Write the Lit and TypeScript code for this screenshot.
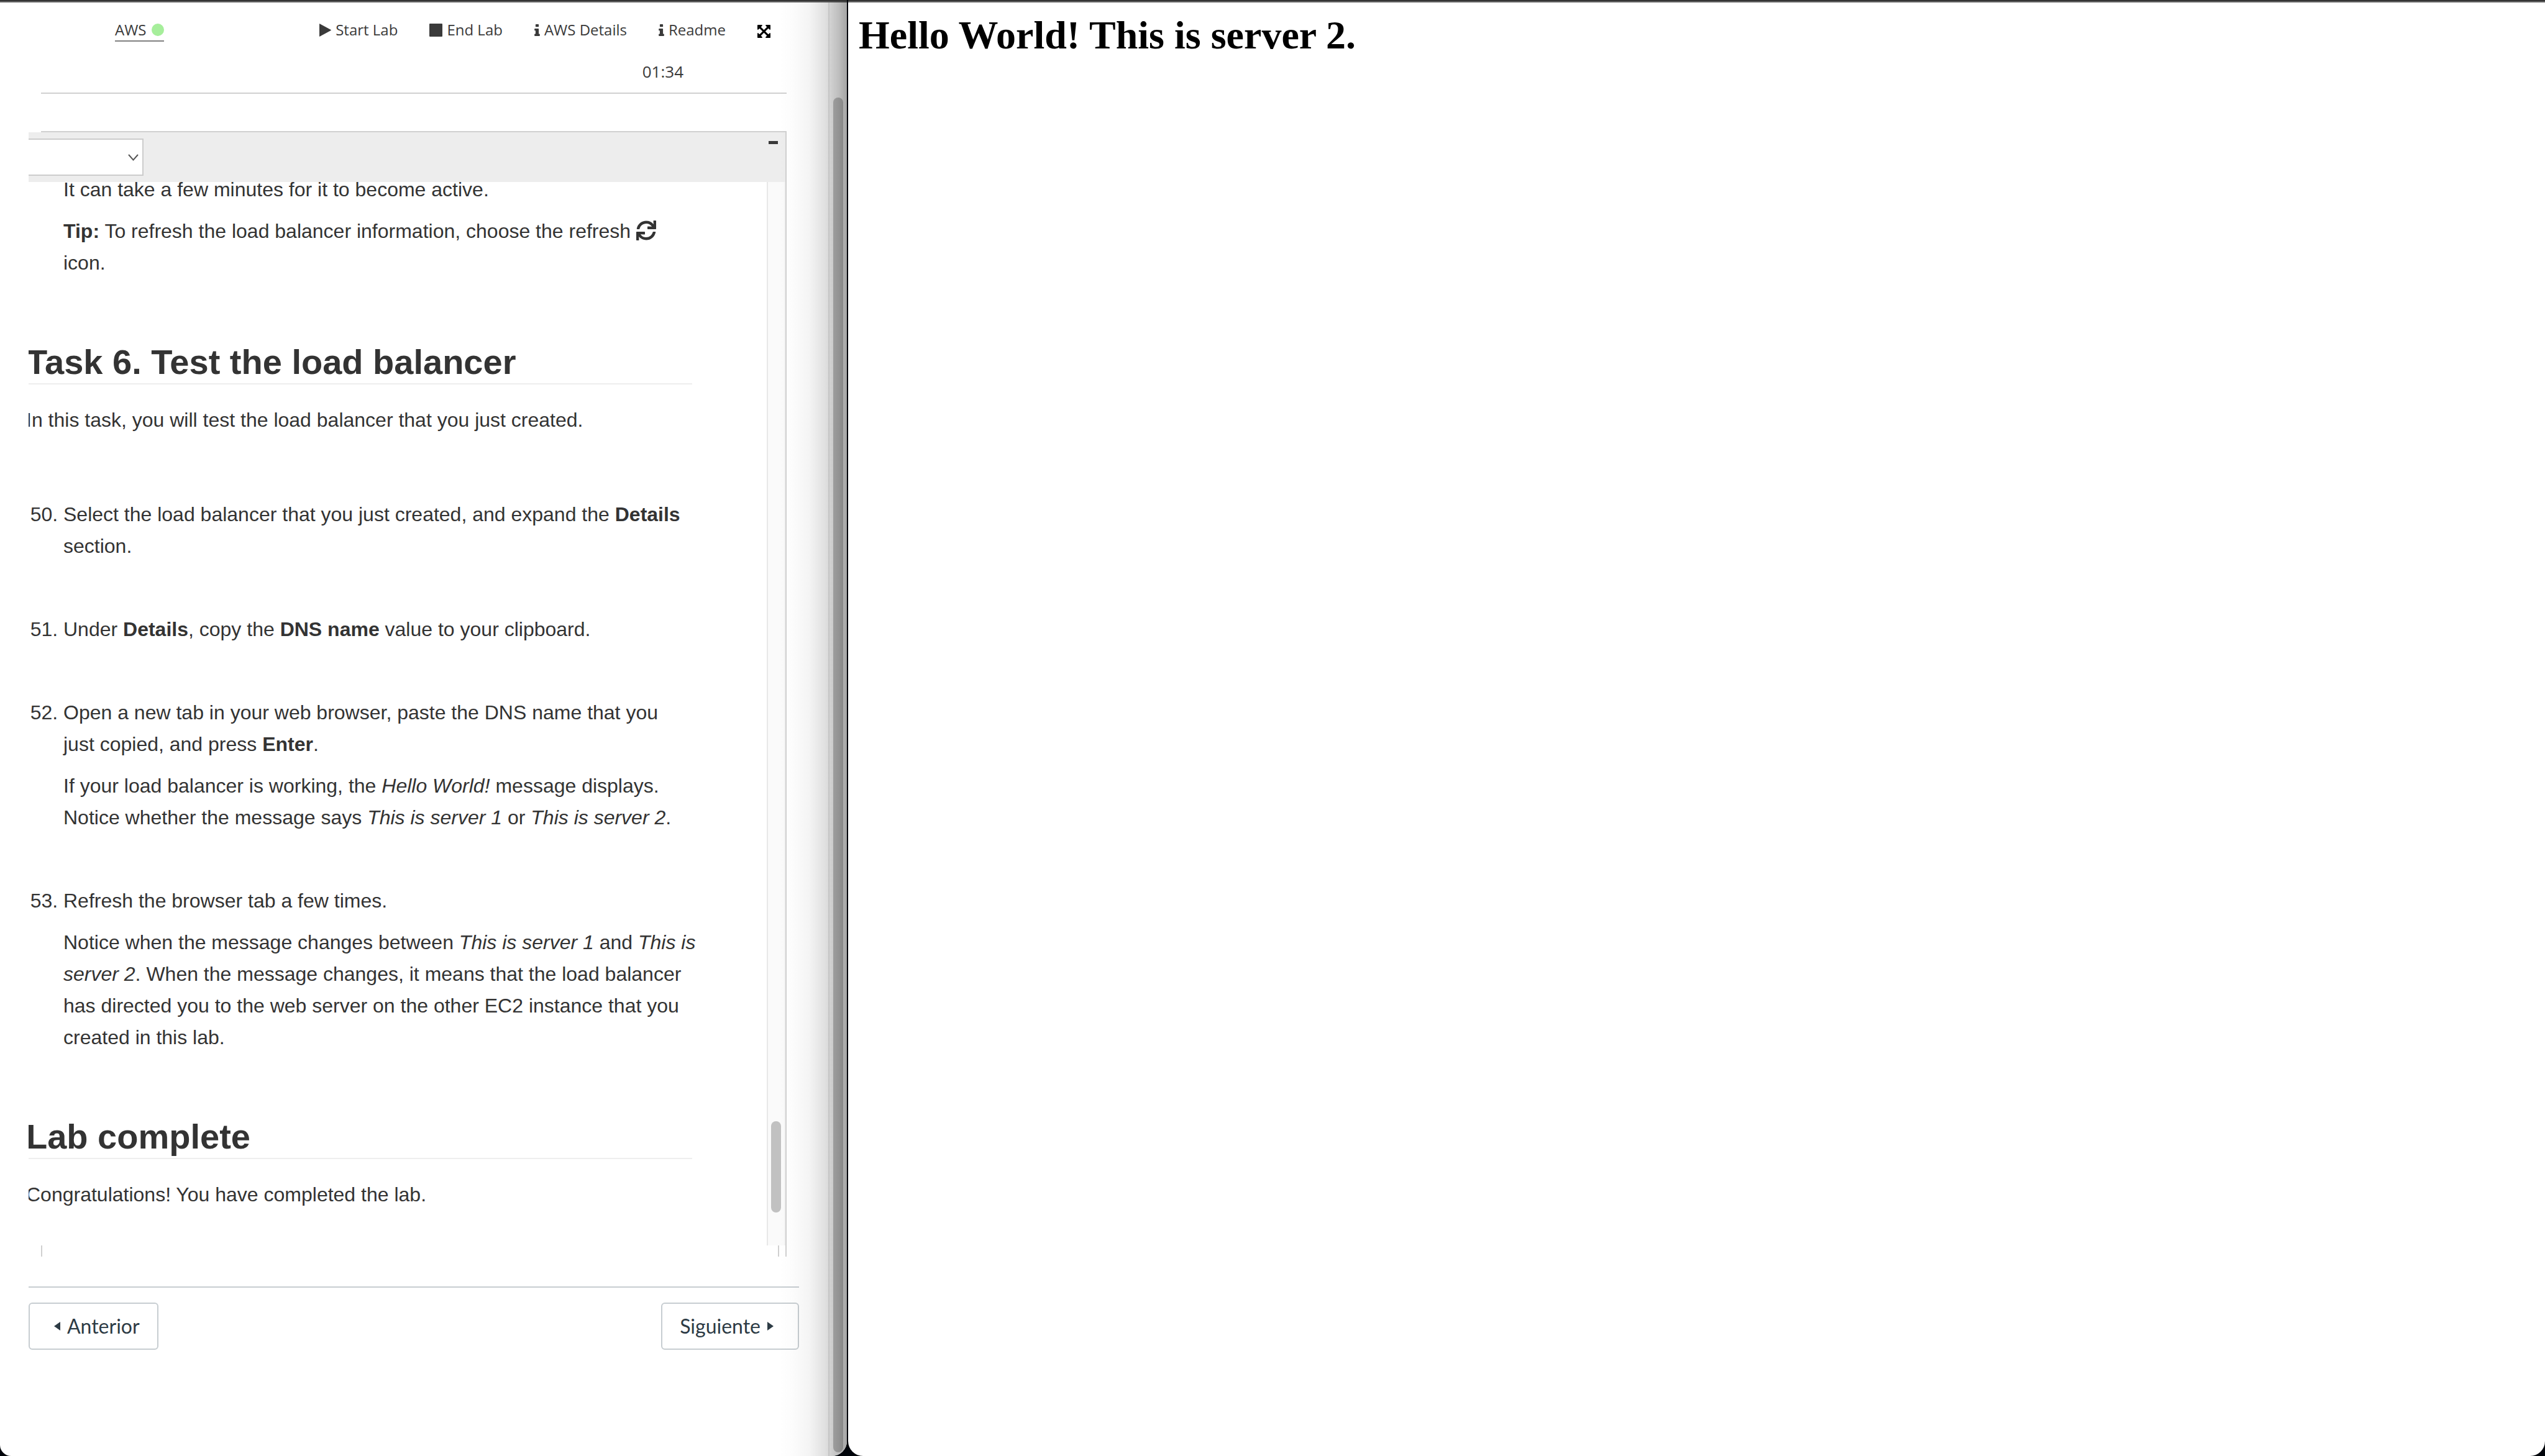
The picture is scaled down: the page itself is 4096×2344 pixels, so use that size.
import { LitElement, html, css, svg } from "lit";
import { customElement, property } from "lit/decorators.js";

const ICONS: Record<string, { box: string; shape: unknown }> = {
  play: {
    box: "0 0 19 21",
    shape: svg`<path d="M0 .6Q0 0 .6.2L18.6 10Q19.2 10.5 18.6 11L.6 20.8Q0 21 0 20.4z"/>`,
  },
  stop: { box: "0 0 21 21", shape: svg`<rect width="21" height="21" rx="1"/>` },
  info: {
    box: "576 128 640 1408",
    shape: svg`<path d="M1216 1344v128q0 26-19 45t-45 19h-512q-26 0-45-19t-19-45v-128q0-26 19-45t45-19h64v-384h-64q-26 0-45-19t-19-45v-128q0-26 19-45t45-19h384q26 0 45 19t19 45v576h64q26 0 45 19t19 45zm-128-1152v192q0 26-19 45t-45 19h-256q-26 0-45-19t-19-45v-192q0-26 19-45t45-19h256q26 0 45 19t19 45z"/>`,
  },
  expand: {
    box: "128 128 1536 1536",
    shape: svg`<path d="M1411 541l-355 355 355 355 144-144q29-31 70-14 39 17 39 59v448q0 26-19 45t-45 19h-448q-42 0-59-40-17-39 14-69l144-144-355-355-355 355 144 144q31 30 14 69-17 40-59 40h-448q-26 0-45-19t-19-45v-448q0-42 40-59 39-17 69 14l144 144 355-355-355-355-144 144q-19 19-45 19-12 0-24-5-40-17-40-59v-448q0-26 19-45t45-19h448q42 0 59 40 17 39-14 69l-144 144 355 355 355-355-144-144q-31-30-14-69 17-40 59-40h448q26 0 45 19t19 45v448q0 42-39 59-13 5-25 5-26 0-45-19z"/>`,
  },
  refresh: {
    box: "0 0 512 512",
    shape: svg`<path d="M440.65 12.57l4 82.77A247.16 247.16 0 0 0 255.83 8C134.73 8 33.91 94.92 12.29 209.82A12 12 0 0 0 24.09 224h49.05a12 12 0 0 0 11.67-9.26 175.91 175.91 0 0 1 317-56.94l-101.46-4.86a12 12 0 0 0-12.57 12v47.41a12 12 0 0 0 12 12H500a12 12 0 0 0 12-12V12a12 12 0 0 0-12-12h-47.37a12 12 0 0 0-11.98 12.57zM255.83 432a175.61 175.61 0 0 1-146-77.8l101.8 4.87a12 12 0 0 0 12.57-12v-47.4a12 12 0 0 0-12-12H12a12 12 0 0 0-12 12V500a12 12 0 0 0 12 12h47.35a12 12 0 0 0 12-12.6l-4.15-82.57A247.17 247.17 0 0 0 255.83 504c121.11 0 221.93-86.92 243.55-201.82a12 12 0 0 0-11.8-14.18h-49.05a12 12 0 0 0-11.67 9.26A175.86 175.86 0 0 1 255.83 432z"/>`,
  },
  left: { box: "0 0 10 14", shape: svg`<path d="M10 0v14L0 7z"/>` },
  right: { box: "0 0 10 14", shape: svg`<path d="M0 0v14l10-7z"/>` },
  chevron: {
    box: "0 0 17 11",
    shape: svg`<path d="M1 1l7.5 8.5L16 1" fill="none" stroke="currentColor" stroke-width="2"/>`,
  },
};

@customElement("ui-icon")
export class UiIcon extends LitElement {
  @property() name = "play";
  static styles = css`
    :host {
      display: inline-block;
    }
    .glyph {
      display: block;
      width: 100%;
      height: 100%;
      fill: currentColor;
    }
  `;
  render() {
    const icon = ICONS[this.name];
    return html`<svg class="glyph" viewBox=${icon.box} aria-hidden="true">${icon.shape}</svg>`;
  }
}

@customElement("lab-toolbar")
export class LabToolbar extends LitElement {
  static styles = css`
    :host {
      display: block;
      font-family: "Open Sans", "Noto Sans", sans-serif;
      font-size: 24px;
      line-height: 34px;
      color: #3a3a3a;
    }
    .menu {
      display: flex;
      align-items: center;
      gap: 51px;
      height: 34px;
      padding: 27px 26px 0 119px;
    }
    .aws {
      display: flex;
      align-items: center;
      gap: 8px;
      height: 35px;
      margin-right: auto;
      padding-top: 1px;
      border-bottom: 2px solid #808080;
      color: inherit;
      text-decoration: none;
    }
    .dot {
      width: 20px;
      height: 20px;
      border-radius: 50%;
      background: #a6ee9b;
    }
    .item {
      display: flex;
      align-items: center;
      gap: 7px;
      padding: 0;
      border: 0;
      background: none;
      font: inherit;
      color: inherit;
    }
    .play {
      width: 19px;
      height: 21px;
    }
    .stop {
      width: 21px;
      height: 21px;
    }
    .info {
      width: 9px;
      height: 19px;
    }
    .expand {
      width: 21px;
      height: 21px;
      padding-top: 4px;
      color: #000;
    }
    .time {
      margin: 33px 166px 0 0;
      font-size: 26px;
      text-align: right;
    }
  `;
  render() {
    return html`
      <nav class="menu">
        <a class="aws" href="#aws">AWS <span class="dot"></span></a>
        <button class="item"><ui-icon class="play" name="play"></ui-icon>Start Lab</button>
        <button class="item"><ui-icon class="stop" name="stop"></ui-icon>End Lab</button>
        <button class="item"><ui-icon class="info" name="info"></ui-icon>AWS Details</button>
        <button class="item"><ui-icon class="info" name="info"></ui-icon>Readme</button>
        <button class="item" aria-label="Full screen">
          <ui-icon class="expand" name="expand"></ui-icon>
        </button>
      </nav>
      <div class="time">01:34</div>
    `;
  }
}

@customElement("lab-guide")
export class LabGuide extends LitElement {
  static styles = css`
    :host {
      display: block;
      font-family: "Liberation Sans", Arial, sans-serif;
      font-size: 32px;
      line-height: 51px;
      color: #333;
    }
    .doc {
      margin: -13px 90px 0 -4px;
    }
    p {
      margin: 0 0 16px;
    }
    .heading {
      margin: 100px 30px 0 0;
      border-bottom: 2px solid #eee;
      font-size: 56px;
      line-height: 68px;
      font-weight: 700;
    }
    .intro {
      margin: 32px 0 101px;
    }
    .steps {
      margin: 0;
      padding-left: 60px;
    }
    .step {
      margin-bottom: 83px;
    }
    .step:last-child,
    .step p:last-child {
      margin-bottom: 0;
    }
    .carry {
      padding-left: 60px;
    }
    .refresh {
      width: 32px;
      height: 32px;
      vertical-align: -4px;
    }
  `;
  render() {
    return html`
      <article class="doc">
        <div class="carry">
          <p>It can take a few minutes for it to become active.</p>
          <p>
            <strong>Tip:</strong> To refresh the load balancer information, choose the refresh
            <ui-icon class="refresh" name="refresh"></ui-icon><br />icon.
          </p>
        </div>
        <h2 class="heading">Task 6. Test the load balancer</h2>
        <p class="intro">In this task, you will test the load balancer that you just created.</p>
        <ol class="steps" start="50">
          <li class="step">
            <p>
              Select the load balancer that you just created, and expand the
              <strong>Details</strong><br />section.
            </p>
          </li>
          <li class="step">
            <p>
              Under <strong>Details</strong>, copy the <strong>DNS name</strong> value to your
              clipboard.
            </p>
          </li>
          <li class="step">
            <p>
              Open a new tab in your web browser, paste the DNS name that you<br />just copied, and
              press <strong>Enter</strong>.
            </p>
            <p>
              If your load balancer is working, the <em>Hello World!</em> message displays.<br />
              Notice whether the message says <em>This is server 1</em> or
              <em>This is server 2</em>.
            </p>
          </li>
          <li class="step">
            <p>Refresh the browser tab a few times.</p>
            <p>
              Notice when the message changes between <em>This is server 1</em> and
              <em>This is<br />server 2</em>. When the message changes, it means that the load
              balancer<br />has directed you to the web server on the other EC2 instance that
              you<br />created in this lab.
            </p>
          </li>
        </ol>
        <h2 class="heading">Lab complete</h2>
        <p class="intro">Congratulations! You have completed the lab.</p>
      </article>
    `;
  }
}

@customElement("app-root")
export class AppRoot extends LitElement {
  static styles = css`
    :host {
      display: grid;
      grid-template-columns: 1363fr 2731fr;
      gap: 2px;
      min-height: 100vh;
      background: #00040a;
    }
    .window {
      box-sizing: border-box;
      overflow: hidden;
      padding-top: 2px;
      border-top: 2px solid #343434;
      background: #fff;
      box-shadow: inset 0 2px #666;
      border-radius: 0 0 24px 24px;
    }
    .lab {
      position: relative;
      display: grid;
      grid-template-columns: 1fr 30px;
      border-bottom-left-radius: 18px;
    }
    .shade {
      position: absolute;
      inset: 0 0 0 auto;
      width: 110px;
      background: linear-gradient(
        to right,
        rgba(0, 0, 0, 0),
        rgba(0, 0, 0, 0.012) 20%,
        rgba(0, 0, 0, 0.045) 45%,
        rgba(0, 0, 0, 0.13) 70%,
        rgba(0, 0, 0, 0.24) 88%,
        rgba(0, 0, 0, 0.34)
      );
      pointer-events: none;
    }
    .page {
      display: flex;
      flex-direction: column;
      min-width: 0;
      padding: 0 47px 171px 46px;
    }
    .head {
      height: 145px;
      margin: 0 20px 0 20px;
      border-bottom: 2px solid #d0d0d0;
    }
    .spacer {
      height: 60px;
      margin: 0 20px 0 20px;
      border-bottom: 2px solid #d0d0d0;
    }
    .panel {
      display: flex;
      flex-direction: column;
      flex: 1;
      min-height: 0;
      margin-right: 20px;
      border-right: 2px solid #d0d0d0;
    }
    .bar {
      display: flex;
      justify-content: space-between;
      align-items: flex-start;
      padding: 10px 12px 10px 0;
      background: #ededed;
    }
    .picker {
      display: grid;
      grid-template-columns: 185px;
      align-items: center;
      color: #555;
    }
    .select {
      grid-area: 1 / 1;
      width: 100%;
      height: 60px;
      border: 2px solid #ccc;
      border-left: 0;
      border-radius: 0;
      background: #fff;
      appearance: none;
      font-size: 24px;
    }
    .chevron {
      grid-area: 1 / 1;
      justify-self: end;
      width: 17px;
      height: 11px;
      margin-right: 8px;
      pointer-events: none;
    }
    .minus {
      width: 15px;
      height: 5px;
      margin-top: 4px;
      padding: 0;
      border: 0;
      background: #3a3a3a;
    }
    .scroller {
      display: grid;
      grid-template-columns: 1fr 30px;
      flex: 1 0 0;
      overflow: hidden;
    }
    .guide {
      min-width: 0;
      overflow: hidden;
    }
    .track {
      display: flex;
      flex-direction: column;
      justify-content: flex-end;
      align-items: center;
      box-sizing: border-box;
      border-left: 2px solid #e8e8e8;
      background: #fafafa;
    }
    .inner {
      border-right: 2px solid #f3f3f3;
    }
    .thumb {
      width: 16px;
      height: 147px;
      margin-bottom: 53px;
      border-radius: 8px;
      background: #c1c1c1;
    }
    .outer {
      flex: 1;
      margin: 153px 0 6px;
    }
    .stubs {
      height: 18px;
      margin: 0 10px 0 20px;
      border: 2px solid #d0d0d0;
      border-width: 0 2px;
    }
    .pager {
      display: flex;
      justify-content: space-between;
      margin-top: 48px;
      padding-top: 24px;
      border-top: 2px solid #c7cdd1;
    }
    .step {
      display: flex;
      align-items: center;
      gap: 11px;
      box-sizing: border-box;
      height: 76px;
      padding: 0 28px;
      border: 2px solid #c7cdd1;
      border-radius: 6px;
      color: #2d3b45;
      font: 32px/48px Lato, sans-serif;
      text-decoration: none;
    }
    .prev {
      padding-left: 39px;
    }
    .next {
      padding-right: 39px;
    }
    .arrow {
      width: 10px;
      height: 14px;
    }
    .hello {
      margin: 16px 17px;
      color: #000;
      font: 700 64px/74px "Liberation Serif", "Times New Roman", serif;
    }
  `;
  render() {
    return html`
      <section class="window lab">
        <div class="page">
          <header class="head"><lab-toolbar></lab-toolbar></header>
          <div class="spacer"></div>
          <div class="panel">
            <div class="bar">
              <label class="picker">
                <select class="select" aria-label="Language">
                  <option></option>
                </select>
                <ui-icon class="chevron" name="chevron"></ui-icon>
              </label>
              <button class="minus" aria-label="Minimize"></button>
            </div>
            <div class="scroller">
              <lab-guide class="guide"></lab-guide>
              <div class="track inner"><div class="thumb"></div></div>
            </div>
            <div class="stubs"></div>
          </div>
          <nav class="pager">
            <a class="step prev" href="#anterior">
              <ui-icon class="arrow" name="left"></ui-icon>Anterior
            </a>
            <a class="step next" href="#siguiente">
              Siguiente<ui-icon class="arrow" name="right"></ui-icon>
            </a>
          </nav>
        </div>
        <div class="track"><div class="thumb outer"></div></div>
        <div class="shade"></div>
      </section>
      <main class="window">
        <h1 class="hello">Hello World! This is server 2.</h1>
      </main>
    `;
  }
}
